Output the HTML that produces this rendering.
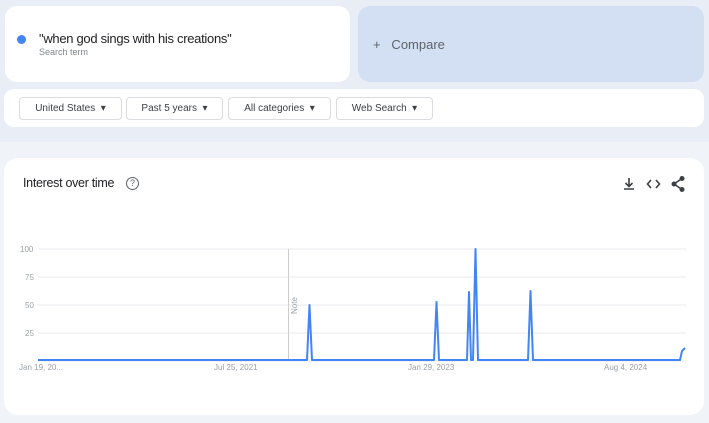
<!DOCTYPE html><html><head><style>
body{margin:0;width:709px;height:423px;background:#f0f4f9;font-family:"Liberation Sans",sans-serif;position:relative;overflow:hidden}
.top{position:absolute;left:0;top:0;width:709px;height:142px;background:#e9eef6}
.card{position:absolute;background:#fff;border-radius:12px}
.chip{position:absolute;top:97px;height:21px;border:1px solid #dadce0;border-radius:4px;font-size:10px;color:#3c4043;line-height:21px;text-align:center;background:#fff}
.ax{position:absolute;font-size:8px;color:#9aa0a6}
</style></head><body>
<div class="top"></div>
<div class="card" style="left:5px;top:6px;width:345px;height:76px"></div>
<div style="position:absolute;left:17px;top:35px;width:9px;height:9px;border-radius:50%;background:#4285f4"></div>
<div style="position:absolute;left:39px;top:31px;font-size:13px;color:#202124;letter-spacing:-0.3px">"when god sings with his creations"</div>
<div style="position:absolute;left:39px;top:47px;font-size:9px;color:#80868b">Search term</div>
<div class="card" style="left:358px;top:6px;width:346px;height:76px;background:#d3e0f4"></div>
<div style="position:absolute;left:373px;top:37px;font-size:13px;color:#5f6368">+&nbsp;&nbsp; Compare</div>
<div class="card" style="left:4px;top:89px;width:700px;height:38px;border-radius:10px"></div>
<div class="chip" style="left:19px;width:101px">United States &nbsp;▾</div>
<div class="chip" style="left:126px;width:95px">Past 5 years &nbsp;▾</div>
<div class="chip" style="left:228px;width:101px">All categories &nbsp;▾</div>
<div class="chip" style="left:336px;width:95px">Web Search &nbsp;▾</div>
<div class="card" style="left:4px;top:158px;width:700px;height:257px;border-radius:14px"></div>
<div style="position:absolute;left:23px;top:176px;font-size:12.5px;color:#202124;letter-spacing:-0.3px">Interest over time</div>
<div style="position:absolute;left:126px;top:177px;width:11px;height:11px;border:1.3px solid #5f6368;border-radius:50%;font-size:9px;line-height:11px;text-align:center;color:#5f6368">?</div>
<svg style="position:absolute;left:620px;top:175px" width="70" height="18" viewBox="0 0 70 18" fill="none" stroke="#3c4043" stroke-width="1.6">
<path d="M9 3v8M5.5 8l3.5 3.5L12.5 8M4 14h10"/>
<path d="M31 5l-3.5 4 3.5 4M36 5l3.5 4-3.5 4"/>
<circle cx="62" cy="3.5" r="1.7" fill="#3c4043"/><circle cx="54" cy="9" r="1.7" fill="#3c4043"/><circle cx="62" cy="14.5" r="1.7" fill="#3c4043"/><path d="M62 3.5L54 9l8 5.5"/>
</svg>
<svg style="position:absolute;left:0;top:0" width="709" height="423">
<g stroke="#e8eaed" stroke-width="1"><line x1="38" y1="249" x2="686" y2="249"/><line x1="38" y1="277" x2="686" y2="277"/><line x1="38" y1="305" x2="686" y2="305"/><line x1="38" y1="333" x2="686" y2="333"/><line x1="38" y1="361" x2="686" y2="361"/></g>
<line x1="288.5" y1="249" x2="288.5" y2="361" stroke="#ccc"/>
<text x="0" y="0" transform="translate(297,314) rotate(-90)" font-size="8" fill="#9aa0a6" font-family="Liberation Sans">Note</text>
<polyline fill="none" stroke="#4285f4" stroke-width="2" stroke-linejoin="round" points="38,360 307,360 309.5,305 312,360 434,360 436.5,302 439,360 467,360 469,292 471,360 473,360 475.5,249 478,360 528,360 530.5,291 533,360 680,360 682,351 685,348"/>
</svg>
<div class="ax" style="left:20px;top:245px">100</div>
<div class="ax" style="left:25px;top:273px">75</div>
<div class="ax" style="left:25px;top:301px">50</div>
<div class="ax" style="left:25px;top:329px">25</div>
<div class="ax" style="left:19px;top:363px">Jan 19, 20...</div>
<div class="ax" style="left:214px;top:363px">Jul 25, 2021</div>
<div class="ax" style="left:408px;top:363px">Jan 29, 2023</div>
<div class="ax" style="left:604px;top:363px">Aug 4, 2024</div>
</body></html>
